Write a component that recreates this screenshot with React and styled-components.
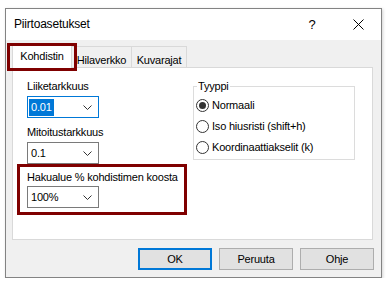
import React from 'react';
import styled, { createGlobalStyle } from 'styled-components';

const GlobalStyle = createGlobalStyle`
  body {
    margin: 0;
    background: #ffffff;
    font-family: "Liberation Sans", Arial, sans-serif;
    font-size: 11px;
    letter-spacing: -0.2px;
    color: #000000;
  }
`;

const Window = styled.div`
  position: relative;
  box-sizing: border-box;
  width: 377px;
  height: 270px;
  margin: 8px 0 0 5px;
  border: 1px solid #838383;
  background: #f0f0f0;
  box-shadow: 1px 1px 3px rgba(0, 0, 0, 0.18);
  display: flex;
  flex-direction: column;
`;

const TitleBar = styled.div`
  height: 31px;
  background: #ffffff;
  display: flex;
  align-items: center;
  padding-left: 8px;
`;

const Title = styled.span`
  flex: 1;
  font-size: 12px;
  padding-bottom: 2px;
`;

const CaptionButton = styled.div`
  width: 46px;
  height: 31px;
  display: flex;
  align-items: center;
  justify-content: center;
  font-size: 13px;
`;

const Body = styled.div`
  padding: 3px 8px 0 6px;
  display: flex;
  flex-direction: column;
`;

const TabStrip = styled.div`
  display: flex;
  align-items: flex-end;
  height: 25px;
  margin-bottom: -1px;
  position: relative;
  z-index: 1;
`;

const Tab = styled.div`
  box-sizing: border-box;
  width: ${(p) => p.$w}px;
  height: ${(p) => (p.$active ? '25px' : '22px')};
  padding-top: ${(p) => (p.$active ? '5px' : '6px')};
  margin-left: ${(p) => (p.$first ? '0' : '-1px')};
  border: 1px solid #d9d9d9;
  border-bottom: ${(p) => (p.$active ? 'none' : '1px solid #d9d9d9')};
  background: ${(p) => (p.$active ? '#ffffff' : '#f0f0f0')};
  line-height: 15px;
  text-align: center;
  white-space: nowrap;
`;

const Panel = styled.div`
  box-sizing: border-box;
  width: 361px;
  height: 173px;
  border: 1px solid #d9d9d9;
  background: #ffffff;
  display: flex;
  padding: 11px 0 0 14px;
`;

const LeftColumn = styled.div`
  width: 166px;
  flex-shrink: 0;
  display: flex;
  flex-direction: column;
`;

const Label = styled.div`
  line-height: 15px;
  height: 15px;
  margin-bottom: ${(p) => p.$gap || '2px'};
  white-space: nowrap;
`;

const Select = styled.div`
  box-sizing: border-box;
  width: 72px;
  height: 22px;
  border: 1px solid ${(p) => (p.$focused ? '#0078d7' : '#7a7a7a')};
  background: #ffffff;
  display: flex;
  align-items: center;
  padding: 0 6px 0 1px;
  margin-bottom: ${(p) => p.$mb || '0'};
`;

const SelectValue = styled.span`
  flex: 1;
  line-height: 16px;
`;

const ValueText = styled.span`
  display: inline-block;
  padding: 0 2px;
  line-height: 17px;
  background: ${(p) => (p.$selected ? '#0078d7' : 'transparent')};
  color: ${(p) => (p.$selected ? '#ffffff' : '#000000')};
`;

const HighlightGroup = styled.div`
  box-sizing: border-box;
  width: 170px;
  margin-left: -10px;
  border: 3px solid #7f0000;
  padding: 3px 0 4px 7px;
`;

const TabMarker = styled.div`
  position: absolute;
  left: 1px;
  top: 34px;
  width: 70px;
  height: 28px;
  box-sizing: border-box;
  border: 3px solid #7f0000;
  z-index: 2;
  pointer-events: none;
`;

const GroupBox = styled.div`
  position: relative;
  box-sizing: border-box;
  width: 162px;
  height: 74px;
  margin-top: 7px;
  border: 1px solid #dcdcdc;
  padding: 10px 0 0 2px;
  display: flex;
  flex-direction: column;
  gap: 5px;
`;

const GroupTitle = styled.span`
  position: absolute;
  left: 3px;
  top: -8px;
  padding: 0 1px;
  background: #ffffff;
  line-height: 15px;
`;

const RadioRow = styled.div`
  display: flex;
  align-items: center;
  height: 16px;
  white-space: nowrap;
`;

const RadioCircle = styled.span`
  box-sizing: border-box;
  width: 13px;
  height: 13px;
  border-radius: 50%;
  border: 1px solid #333333;
  margin-right: 3px;
  display: flex;
  align-items: center;
  justify-content: center;
  &::after {
    content: '';
    width: 7px;
    height: 7px;
    border-radius: 50%;
    background: ${(p) => (p.$checked ? '#333333' : 'transparent')};
  }
`;

const ButtonRow = styled.div`
  display: flex;
  justify-content: flex-end;
  gap: 7px;
  margin: 8px -1px 0 0;
`;

const Button = styled.div`
  box-sizing: border-box;
  width: 74px;
  height: 22px;
  border: ${(p) => (p.$default ? '2px solid #0078d7' : '1px solid #adadad')};
  background: #e1e1e1;
  display: flex;
  align-items: center;
  justify-content: center;
  line-height: 15px;
`;

const Chevron = () => (
  <svg width="9" height="5" viewBox="0 0 9 5">
    <path d="M0.5 0.5 L4.5 4.5 L8.5 0.5" fill="none" stroke="#333" strokeWidth="1" />
  </svg>
);

const CloseIcon = () => (
  <svg width="11" height="11" viewBox="0 0 11 11">
    <path d="M0.5 0.5 L10.5 10.5 M10.5 0.5 L0.5 10.5" fill="none" stroke="#000" strokeWidth="1" />
  </svg>
);

const Dropdown = ({ value, focused, mb }) => (
  <Select $focused={focused} $mb={mb}>
    <SelectValue>
      <ValueText $selected={focused}>{value}</ValueText>
    </SelectValue>
    <Chevron />
  </Select>
);

const Radio = ({ checked, children }) => (
  <RadioRow>
    <RadioCircle $checked={checked} />
    {children}
  </RadioRow>
);

export default function App() {
  return (
    <>
      <GlobalStyle />
      <Window>
        <TitleBar>
          <Title>Piirtoasetukset</Title>
          <CaptionButton>?</CaptionButton>
          <CaptionButton>
            <CloseIcon />
          </CaptionButton>
        </TitleBar>
        <Body>
          <TabStrip>
            <Tab $active $first $w={60}>Kohdistin</Tab>
            <Tab $w={61}>Hilaverkko</Tab>
            <Tab $w={56}>Kuvarajat</Tab>
          </TabStrip>
          <Panel>
            <LeftColumn>
              <Label>Liiketarkkuus</Label>
              <Dropdown value="0.01" focused mb="7px" />
              <Label>Mitoitustarkkuus</Label>
              <Dropdown value="0.1" />
              <HighlightGroup>
                <Label $gap="1px">Hakualue % kohdistimen koosta</Label>
                <Dropdown value="100%" />
              </HighlightGroup>
            </LeftColumn>
            <GroupBox>
              <GroupTitle>Tyyppi</GroupTitle>
              <Radio checked>Normaali</Radio>
              <Radio>Iso hiusristi (shift+h)</Radio>
              <Radio>Koordinaattiakselit (k)</Radio>
            </GroupBox>
          </Panel>
          <ButtonRow>
            <Button $default>OK</Button>
            <Button>Peruuta</Button>
            <Button>Ohje</Button>
          </ButtonRow>
        </Body>
        <TabMarker />
      </Window>
    </>
  );
}
